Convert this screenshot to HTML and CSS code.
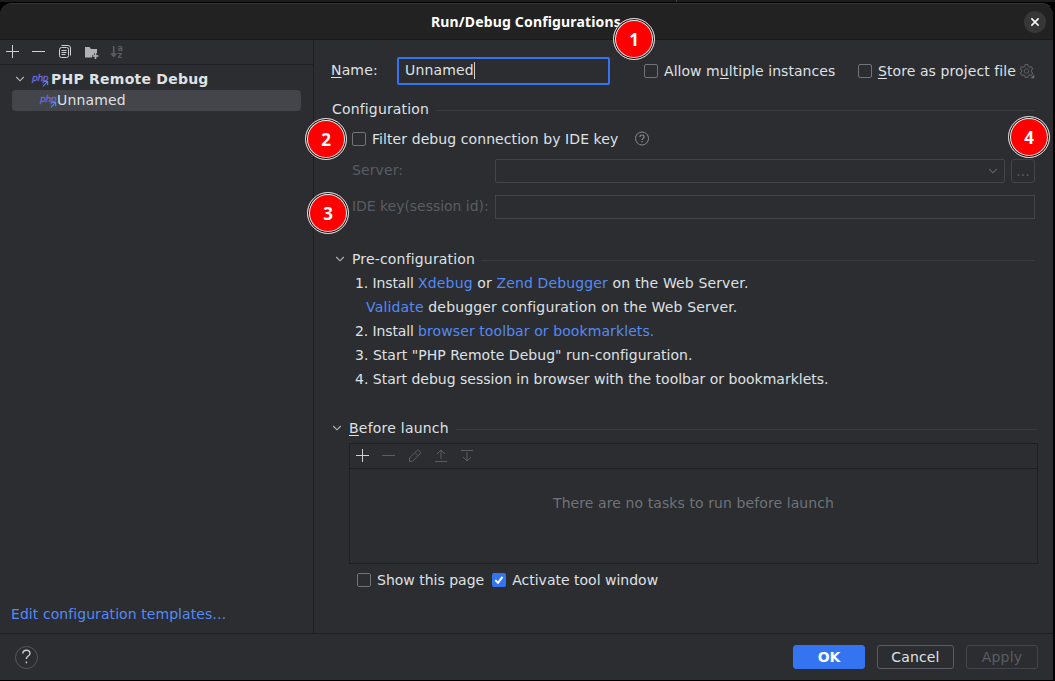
FILE: index.html
```html
<!DOCTYPE html>
<html lang="en">
<head>
<meta charset="utf-8">
<title>Run/Debug Configurations</title>
<link rel="stylesheet" href="styles.css">
</head>
<body>
<svg class="defs" width="0" height="0">
  <symbol id="chev" viewBox="0 0 10 10"><path d="M1.2 3l3.8 3.8L8.8 3" fill="none" stroke="currentColor" stroke-width="1.1"/></symbol>
  <symbol id="plus" viewBox="0 0 16 16"><path d="M8.5 2v13M2 8.5h13" fill="none" stroke="currentColor"/></symbol>
  <symbol id="minus" viewBox="0 0 16 16"><path d="M2 8.5h13" fill="none" stroke="currentColor"/></symbol>
  <symbol id="arrow" viewBox="0 0 8 8"><path d="M1 7.200l5-5M2.500 1.800h4V6" fill="none" stroke="#548af7" stroke-width="1.200"/></symbol>
</svg>
<div class="backdrop"></div>
<div class="dialog">
  <header class="titlebar">
    <h1 class="title">Run/Debug Configurations</h1>
    <button class="close" aria-label="Close"><svg width="10" height="10" viewBox="0 0 10 10"><path d="M1.4 1.4l7.2 7.2M8.6 1.4L1.4 8.6" stroke="#fff" stroke-width="1.5"/></svg></button>
  </header>
  <div class="body">
    <aside class="side">
      <div class="tools">
        <svg class="ic"><use href="#plus"/></svg>
        <svg class="ic"><use href="#minus"/></svg>
        <svg class="ic" viewBox="0 0 16 16" fill="none" stroke="#ced0d6"><path d="M5.500 2.500h6.500q2.500 0 2.500 2.500v7.500"/><rect x="3.500" y="4.500" width="9" height="10" rx="2"/><path d="M5.500 7.500h5M5.500 9.500h5M5.500 11.500h4"/></svg>
        <svg class="ic" viewBox="0 0 16 16"><path d="M3 4h4.500l1.500 2h6v4h-3v2h-2v2.500H3z" fill="#afb1b3"/><path d="M13.500 10v6M10.500 13h6" stroke="#afb1b3" stroke-width="1.700"/></svg>
        <svg class="ic off" viewBox="0 0 16 16"><path d="M5.700 3v9" stroke="currentColor" stroke-width="1.700"/><path d="M2 10.300h7.400L5.700 14.500z" fill="currentColor"/><text class="az" x="9.400" y="7.500">a</text><text class="az" x="9.400" y="14.600">z</text></svg>
      </div>
      <div class="tree">
        <div class="node group"><svg class="chev"><use href="#chev"/></svg><span class="php">php<svg><use href="#arrow"/></svg></span><b class="group-name">PHP Remote Debug</b></div>
        <div class="node leaf"><span class="php">php<svg><use href="#arrow"/></svg></span><span class="leaf-name">Unnamed</span></div>
      </div>
      <a class="link templates">Edit configuration templates…</a>
    </aside>
    <main class="form">
      <div class="row name-row">
        <label class="name-label"><u>N</u>ame:</label>
        <div class="name-input">Unnamed<i class="caret"></i></div>
        <label class="check multi"><i class="box"></i><span>Allow m<u>u</u>ltiple instances</span></label>
        <label class="check store"><i class="box"></i><span><u>S</u>tore as project file</span></label>
        <svg class="gear" viewBox="0 0 16 16" fill="none" stroke="#5a5d63"><path d="M6.300 1.500h2.400l.6 1.800 1.300.8 1.900-.4 1.200 2.100-1.300 1.400v1.600l1.300 1.400-1.200 2.100-1.900-.4-1.300.8-.6 1.800H6.300l-.6-1.800-1.300-.8-1.900.4-1.200-2.100 1.300-1.400V7.200L1.300 5.800l1.200-2.100 1.900.4 1.300-.8z" stroke-width="1.100" stroke-linejoin="round"/><circle cx="7.500" cy="8" r="2.300"/><path d="M15.500 11v4.500H11z" fill="#6f737a" stroke="#2b2d30" stroke-width=".5"/></svg>
      </div>
      <div class="section conf"><span>Configuration</span><i class="rule"></i></div>
      <div class="row filter-row">
        <label class="check filter"><i class="box"></i><span>Filter debug connection by IDE key</span></label>
        <svg class="hint" viewBox="0 0 16 16" fill="none" stroke="#868a91"><circle cx="8" cy="7.500" r="6.500"/><path d="M6 6q0-2 2-2t2 1.800q0 1-1 1.600t-1 1.500M8 10.100v1.200" stroke-width="1.200"/></svg>
      </div>
      <div class="row field-row server">
        <label class="field-label">Server:</label>
        <div class="combo"><svg class="chev"><use href="#chev"/></svg></div>
        <button class="more">...</button>
      </div>
      <div class="row field-row key">
        <label class="field-label">IDE key(session id):</label>
        <div class="text-field"></div>
      </div>
      <div class="section pre"><svg class="chev"><use href="#chev"/></svg><span>Pre-configuration</span><i class="rule"></i></div>
      <div class="steps">
        <p class="s1"><span class="num">1. Install </span><a class="link">Xdebug</a> or <a class="link">Zend Debugger</a> on the Web Server.</p>
        <p class="sub"><a class="link">Validate</a> debugger configuration on the Web Server.</p>
        <p class="s2"><span class="num">2. Install </span><a class="link">browser toolbar or bookmarklets.</a></p>
        <p class="s3">3. Start "PHP Remote Debug" run-configuration.</p>
        <p class="s4">4. Start debug session in browser with the toolbar or bookmarklets.</p>
      </div>
      <div class="section before"><svg class="chev"><use href="#chev"/></svg><span><u>B</u>efore launch</span><i class="rule"></i></div>
      <div class="tasks">
        <div class="tasks-tools">
          <svg class="ic"><use href="#plus"/></svg>
          <svg class="ic off"><use href="#minus"/></svg>
          <svg class="ic off" viewBox="0 0 16 16" fill="none" stroke="currentColor"><path d="M3.500 14.500v-3.500l7.300-7.300q1.200-1.200 2.400 0l.8.800q1.200 1.200 0 2.400L6.700 14.200zM9 5.500l3.300 3.300"/></svg>
          <svg class="ic off" viewBox="0 0 16 16" fill="none" stroke="currentColor"><path d="M9 12V3M5 7l4-4 4 4M3 14.500h12"/></svg>
          <svg class="ic off" viewBox="0 0 16 16" fill="none" stroke="currentColor"><path d="M9 5v9M5 10l4 4 4-4M3 3.500h12"/></svg>
        </div>
        <div class="empty">There are no tasks to run before launch</div>
      </div>
      <div class="row page-row">
        <label class="check"><i class="box"></i><span>Show this page</span></label>
        <label class="check"><i class="box on"><svg width="14" height="14" viewBox="0 0 14 14"><path d="M3.300 7.200l2.700 2.700 4.500-6" fill="none" stroke="#fff" stroke-width="1.900"/></svg></i><span>Activate tool window</span></label>
      </div>
    </main>
  </div>
  <footer class="footer">
    <button class="help" aria-label="Help"><svg width="24" height="24" viewBox="0 0 24 24" fill="none"><circle cx="12.500" cy="12.500" r="11" stroke="#55585e"/><path d="M8.800 8.500q.2-3.300 3.600-3.300t3.600 3q0 1.600-1.800 2.800t-1.800 3M12.400 16.500v1.800" stroke="#ced0d6" stroke-width="1.400"/></svg></button>
    <button class="btn ok">OK</button>
    <button class="btn cancel">Cancel</button>
    <button class="btn apply">Apply</button>
  </footer>
</div>
<span class="badge b1">1</span>
<span class="badge b2">2</span>
<span class="badge b3">3</span>
<span class="badge b4">4</span>
</body>
</html>
```
FILE: styles.css
```css
* { box-sizing: border-box; }
body { margin: 0; width: 1055px; height: 681px; overflow: hidden; position: relative; background: #000; color: #dfe1e5; font: 14px/20px "DejaVu Sans", sans-serif; }
.defs { position: absolute; }
svg { flex: none; }
button { border: 0; padding: 0; margin: 0; font: inherit; color: inherit; background: none; }
u { text-decoration: underline; text-underline-offset: 2px; text-decoration-skip-ink: none; }
.link { color: #548af7; }
.backdrop { height: 2px; background: linear-gradient(90deg, #1b1c1e 676px, #393b40 676px 677px, #1b1c20 677px); }
.dialog { width: 1054px; height: 677px; border-right: 1px solid #000; border-top: 1px solid #353535; margin-top: 1px; border-radius: 12px 12px 0 0; background: #2b2d30; display: flex; flex-direction: column; overflow: hidden; }
.titlebar { flex: none; height: 36px; background: #222; border-bottom: 1px solid #1a1a1b; display: flex; align-items: center; justify-content: flex-end; padding-right: 7px; }
.title { margin: 0 auto 0 431px; font: bold 14px/20px "Noto Sans", sans-serif; letter-spacing: .16px; color: #fff; white-space: nowrap; }
.close { width: 22px; height: 22px; border-radius: 50%; background: #373737; display: grid; place-items: center; }
.body { flex: none; height: 593px; display: flex; }
.side { width: 314px; border-right: 1px solid #1e1f22; display: flex; flex-direction: column; }
.tools { height: 25px; border-bottom: 1px solid #1e1f22; display: flex; align-items: center; gap: 10px; padding: 0 0 2px 4px; color: #ced0d6; }
.ic { width: 16px; height: 16px; overflow: visible; }
.off { color: #5a5d63; }
.az { font: bold 8px/8px "DejaVu Sans", sans-serif; fill: currentColor; }
.tree { padding-top: 4px; }
.node { height: 21px; display: flex; align-items: center; }
.group { padding: 0 0 2px 15px; letter-spacing: .24px; }
.leaf { margin: 0 12px; padding: 0 0 2px 28px; background: #43454a; border-radius: 4px; }
.leaf-name { letter-spacing: .15px; }
.chev { width: 10px; height: 10px; color: #b4b8bf; }
.php { width: 17px; height: 14px; line-height: 12px; font-size: 9px; font-style: italic; -webkit-text-stroke: .3px #6f6bdc; color: #6f6bdc; position: relative; letter-spacing: -.3px; }
.php svg { position: absolute; left: 10px; top: 8px; width: 7px; height: 7px; }
.group .php { margin-left: 7px; }
.group-name { margin-left: 2px; }
.templates { margin: auto 0 9px 11px; letter-spacing: .07px; }
.form { flex: 1; padding: 17px 18px 0 17px; }
.row, .section { display: flex; align-items: center; }
.name-label { width: 66px; padding-bottom: 2px; letter-spacing: .15px; }
.name-input { width: 213px; height: 28px; border: 2px solid #3574f0; border-radius: 2px; padding-left: 6px; display: flex; align-items: center; padding-bottom: 2px; letter-spacing: .15px; }
.caret { width: 1px; height: 17px; background: #ced0d6; }
.check { display: flex; align-items: center; gap: 6px; white-space: nowrap; }
.box { width: 14px; height: 14px; border: 1px solid #6f737a; border-radius: 2px; }
.box.on { border: 0; background: #3574f0; }
.box svg { display: block; }
.multi { margin-left: 34px; letter-spacing: .05px; }
.store { margin-left: auto; letter-spacing: .09px; }
.gear { width: 16px; height: 16px; margin-left: 3px; }
.section { height: 20px; }
.rule { flex: 1; height: 1px; background: #393b40; margin: 3px 0 0 7px; }
.conf { margin: 14px 0 0 1px; letter-spacing: .16px; }
.filter-row { height: 20px; margin: 10px 0 0 21px; }
.filter { letter-spacing: .08px; }
.hint { width: 16px; height: 16px; margin-left: 16px; }
.field-row { height: 24px; margin-left: 21px; color: #5a5d63; }
.server { margin-top: 10px; letter-spacing: .1px; }
.key { margin-top: 12px; }
.key .field-label { letter-spacing: -.04px; }
.field-label { width: 143px; margin-top: -2px; white-space: nowrap; }
.combo, .text-field { flex: 1; height: 24px; border: 1px solid #43454a; }
.combo { border-radius: 2px; display: flex; align-items: center; justify-content: flex-end; padding-right: 6px; }
.combo .chev { color: #5f636a; }
.more { width: 24px; height: 24px; border: 1px solid #43454a; border-radius: 3px; margin-left: 6px; }
.pre { margin: 30px 0 0 4px; letter-spacing: .17px; }
.pre .chev { margin-right: 7px; }
.pre .rule { margin-left: 6px; }
.steps { margin: 2px 0 0 24px; }
.steps p { margin: 0; line-height: 24px; white-space: nowrap; }
.steps .num { letter-spacing: -.12px; }
.steps .s1 { letter-spacing: .14px; }
.steps .sub { padding-left: 11px; letter-spacing: .16px; }
.steps .s2 { letter-spacing: .09px; }
.steps .s3 { letter-spacing: .03px; }
.before { margin: 27px -2px 0 1px; letter-spacing: .22px; }
.before .chev { margin-right: 7px; }
.tasks { height: 121px; margin: 5px -3px 0 18px; border: 1px solid #1e1f22; }
.tasks-tools { height: 25px; border-bottom: 1px solid #1e1f22; display: flex; align-items: center; gap: 10px; padding: 0 0 2px 4px; color: #ced0d6; }
.empty { margin-top: 24px; text-align: center; color: #6f737a; letter-spacing: .09px; }
.page-row { height: 20px; margin: 6px 0 0 26px; gap: 8px; }
.footer { flex: 1; border-top: 1px solid #1e1f22; display: flex; align-items: center; padding: 0 15px 1px 14px; }
.help { width: 24px; height: 24px; margin-right: auto; }
.help svg { display: block; }
.btn { height: 24px; border-radius: 3px; border: 1px solid #5a5d63; width: 72px; line-height: 20px; }
.ok { background: #3574f0; border-color: #3574f0; color: #fff; font-weight: bold; }
.cancel { width: 77px; margin: 0 12px; letter-spacing: .15px; }
.apply { color: #5a5d63; border-color: #43454a; letter-spacing: .15px; }
.badge { position: absolute; width: 42px; height: 42px; border-radius: 50%; background: red; border: 1px solid #ddd; box-shadow: inset 0 0 0 1px #111, inset 0 0 0 2px #eee; color: #fff; font: bold 17px/41px "Noto Sans", sans-serif; text-align: center; }
.b1 { left: 613px; top: 18px; }
.b2 { left: 305px; top: 118px; }
.b3 { left: 307px; top: 192px; }
.b4 { left: 1008px; top: 116px; }
```
